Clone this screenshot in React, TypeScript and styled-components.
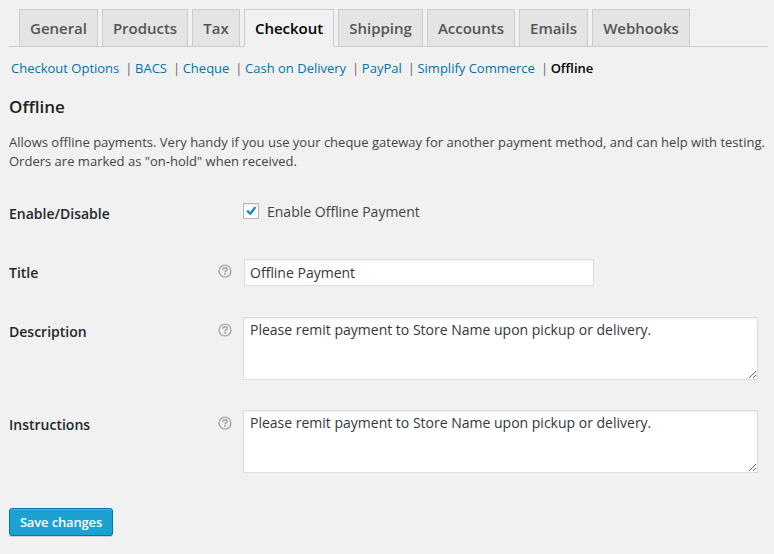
import React from "react";
import styled, { createGlobalStyle } from "styled-components";

const GlobalStyle = createGlobalStyle`
  * { box-sizing: border-box; }
  html, body { margin: 0; background: #f1f1f1; }
  body { font: 13px/1.4 "Open Sans", sans-serif; color: #444; overflow: hidden; }
`;

const Page = styled.main`
  width: 774px;
  height: 554px;
  padding: 9px 6px 0 9px;
  display: flex;
  flex-direction: column;
  align-items: flex-start;
`;

const TabBar = styled.nav`
  display: flex;
  gap: 4px;
  width: 759px;
  height: 38px;
  padding-left: 10px;
  border-bottom: 1px solid #ccc;
`;

const Tab = styled.a<{ $width: number; $active?: boolean }>`
  flex: none;
  width: ${(p) => p.$width}px;
  height: 38px;
  padding-top: 6px;
  border: 1px solid #ccc;
  border-bottom-color: ${(p) => (p.$active ? "#f1f1f1" : "#ccc")};
  background: ${(p) => (p.$active ? "#f1f1f1" : "#e4e4e4")};
  color: ${(p) => (p.$active ? "#000" : "#555")};
  font-size: 15px;
  font-weight: 600;
  line-height: 24px;
  letter-spacing: -0.02px;
  text-align: center;
  white-space: nowrap;
`;

const SubNav = styled.ul`
  display: flex;
  list-style: none;
  margin: 8px 0 0 -0.6px;
  padding: 0;
  line-height: 26px;
  white-space: pre;
  color: #666;
`;

const SubLink = styled.a<{ $current?: boolean }>`
  padding: 0 2.6px;
  color: ${(p) => (p.$current ? "#000" : "#0073aa")};
  font-weight: ${(p) => (p.$current ? 600 : 400)};
`;

const Heading = styled.h3`
  margin: 14px 0 0;
  height: 24px;
  font-size: 17px;
  font-weight: 600;
  line-height: 24px;
  color: #222;
`;

const Intro = styled.p`
  margin: 14px 0 0;
  line-height: 19px;
  letter-spacing: 0.008px;
  white-space: nowrap;
`;

const Form = styled.form`
  display: flex;
  flex-direction: column;
  align-items: flex-start;
  margin-top: 13px;
`;

const Row = styled.div<{ $height: number }>`
  display: grid;
  grid-template-columns: 209px 25px 515px;
  height: ${(p) => p.$height}px;
  padding-top: 15px;
`;

const Label = styled.label`
  padding-top: 6px;
  font-size: 14px;
  font-weight: 600;
  line-height: 18px;
  color: #23282d;
`;

const HelpSlot = styled.span`
  padding-top: 6px;
  line-height: 0;
`;

const CheckLabel = styled.label`
  display: flex;
  align-items: flex-start;
  gap: 8px;
  height: 22px;
  padding-top: 4px;
  font-size: 14px;
  line-height: 18px;
`;

const CheckBox = styled.span`
  width: 16px;
  height: 16px;
  border: 1px solid #b4b9be;
  background: #fff;
  box-shadow: inset 0 1px 2px rgba(0, 0, 0, 0.1);
  line-height: 0;
`;

const TextInput = styled.input`
  width: 350px;
  height: 27px;
  margin: 1px 0 0 1px;
  padding: 0 5px;
  border: 1px solid #ddd;
  border-radius: 0;
  background: #fff;
  box-shadow: inset 0 1px 2px rgba(0, 0, 0, 0.07);
  color: #32373c;
  font: 14px "Open Sans", sans-serif;
  outline: none;
`;

const TextArea = styled.textarea`
  display: block;
  width: 515px;
  height: 63px;
  margin: 0;
  padding: 2px 6px;
  border: 1px solid #ddd;
  border-radius: 0;
  background: #fff;
  box-shadow: inset 0 1px 2px rgba(0, 0, 0, 0.07);
  color: #32373c;
  font: 14px/19.6px "Open Sans", sans-serif;
  overflow: auto;
  resize: both;
  outline: none;
`;

const SaveButton = styled.button`
  width: 104px;
  height: 28px;
  margin-top: 20px;
  padding: 0;
  border: 1px solid #0074a2;
  border-radius: 3px;
  background: #1ba1d2;
  box-shadow: inset 0 1px 0 rgba(120, 200, 230, 0.5), 0 1px 0 rgba(0, 0, 0, 0.15);
  color: #fff;
  font: 600 13px/26px "Open Sans", sans-serif;
  letter-spacing: -0.15px;
  white-space: nowrap;
`;

const tabs = [
  { name: "General", width: 79 },
  { name: "Products", width: 86 },
  { name: "Tax", width: 48 },
  { name: "Checkout", width: 90 },
  { name: "Shipping", width: 85 },
  { name: "Accounts", width: 88 },
  { name: "Emails", width: 69 },
  { name: "Webhooks", width: 98 },
];

const sections = ["Checkout Options", "BACS", "Cheque", "Cash on Delivery", "PayPal", "Simplify Commerce", "Offline"];

const remit = "Please remit payment to Store Name upon pickup or delivery.";

const HelpIcon = () => (
  <svg width="14" height="14" viewBox="0 0 14 14" fill="none" stroke="#aaa">
    <circle cx="7" cy="7" r="5.9" strokeWidth="1.4" />
    <path d="M4.8 5.7C4.8 4.5 5.7 3.9 7 3.9S9.1 4.5 9.1 5.5C9.1 6.8 7 6.7 7 8.3" strokeWidth="1.7" />
    <path d="M7 9.1V10.7" strokeWidth="1.7" />
  </svg>
);

export default function App() {
  return (
    <>
      <GlobalStyle />
      <Page>
        <TabBar>
          {tabs.map((t) => (
            <Tab key={t.name} $width={t.width} $active={t.name === "Checkout"}>
              {t.name}
            </Tab>
          ))}
        </TabBar>
        <SubNav>
          {sections.map((s, i) => (
            <li key={s}>
              <SubLink $current={s === "Offline"}>{s}</SubLink>
              {i < sections.length - 1 ? " |" : ""}
            </li>
          ))}
        </SubNav>
        <Heading>Offline</Heading>
        <Intro>
          Allows offline payments. Very handy if you use your cheque gateway for another payment method, and can help with testing.
          <br />
          Orders are marked as "on-hold" when received.
        </Intro>
        <Form>
          <Row $height={59}>
            <Label>Enable/Disable</Label>
            <span />
            <CheckLabel>
              <CheckBox>
                <svg width="14" height="14" viewBox="0 0 14 14">
                  <path d="M2.2 7.4 4.2 5.8 6.1 8 10.4 2.5 12.4 3.6 6.6 11.6Z" fill="#1e8cbe" />
                </svg>
              </CheckBox>
              Enable Offline Payment
            </CheckLabel>
          </Row>
          <Row $height={59}>
            <Label>Title</Label>
            <HelpSlot><HelpIcon /></HelpSlot>
            <TextInput defaultValue="Offline Payment" />
          </Row>
          <Row $height={93}>
            <Label>Description</Label>
            <HelpSlot><HelpIcon /></HelpSlot>
            <TextArea defaultValue={remit} spellCheck={false} />
          </Row>
          <Row $height={93}>
            <Label>Instructions</Label>
            <HelpSlot><HelpIcon /></HelpSlot>
            <TextArea defaultValue={remit} spellCheck={false} />
          </Row>
          <SaveButton type="button">Save changes</SaveButton>
        </Form>
      </Page>
    </>
  );
}
